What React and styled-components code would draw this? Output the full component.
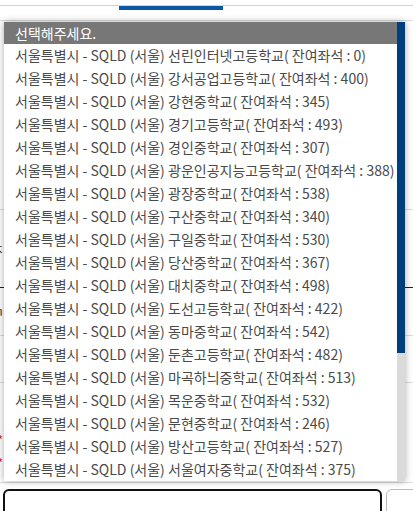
import React from "react";
import styled, { createGlobalStyle } from "styled-components";

const GlobalStyle = createGlobalStyle`
  html, body {
    margin: 0;
    padding: 0;
    background: #fff;
  }
  body {
    font-family: "Noto Sans CJK KR", "Noto Sans", "Liberation Sans", sans-serif;
  }
`;

const Page = styled.div`
  position: relative;
  width: 413px;
  height: 511px;
  overflow: hidden;
  background: #fff;
`;

const TabBar = styled.div`
  padding-top: 5px;
  height: 15px;
`;

const TabLine = styled.div`
  border-top: 1px solid #d3d3d3;
`;

const ActiveTab = styled.div`
  margin-left: 119px;
  width: 104px;
  height: 4px;
  background: #0b57a4;
`;

const FormTable = styled.div`
  border-top: 1px solid #dcdcdc;
  margin: 0 -20px;
`;

const FormRow = styled.div`
  display: flex;
  justify-content: space-between;
  height: ${(p) => p.$h}px;
  border-bottom: 1px solid ${(p) => (p.$dark ? "#222" : "#dcdcdc")};
  box-sizing: border-box;
  font-size: 13px;
  color: #333;
`;

const Cell = styled.div`
  display: flex;
  flex-direction: column;
  justify-content: ${(p) => p.$justify || "center"};
  gap: 6px;
  padding: ${(p) => p.$pad || "0"};
  width: 24px;
  box-sizing: border-box;
  align-items: ${(p) => (p.$right ? "flex-start" : "flex-end")};
`;

const Req = styled.span`
  color: #d22;
  font-size: 12px;
`;

const Warn = styled.span`
  color: #d22;
  font-size: 13px;
`;

const InputRow = styled.div`
  display: flex;
  gap: 4px;
  margin-top: 6px;
  padding-left: 3px;
`;

const Input = styled.div`
  width: ${(p) => p.$w}px;
  height: 30px;
  border: ${(p) => (p.$active ? "2px solid #111" : "1px solid #bbb")};
  border-radius: 6px;
  flex-shrink: 0;
`;

const Dropdown = styled.div`
  position: absolute;
  left: 4px;
  top: 22px;
  width: 401px;
  display: flex;
  background: #fff;
  box-shadow: 0 0 7px rgba(0, 0, 0, 0.35);
`;

const List = styled.ul`
  flex: 1;
  margin: 0;
  padding: 0;
  list-style: none;
`;

const Option = styled.li`
  height: ${(p) => (p.$header ? 22 : 23)}px;
  line-height: ${(p) => (p.$header ? 22 : 23)}px;
  padding-left: 11px;
  font-size: 14px;
  white-space: nowrap;
  background: ${(p) => (p.$header ? "#777" : "#fff")};
  color: ${(p) => (p.$header ? "#fff" : "#4a4a4a")};
`;

const Scrollbar = styled.div`
  width: 8px;
  background: #dadada;
  display: flex;
  flex-direction: column;
`;

const Thumb = styled.div`
  height: 331px;
  background: #003f7e;
`;

const schools = [
  ["선린인터넷고등학교", 0],
  ["강서공업고등학교", 400],
  ["강현중학교", 345],
  ["경기고등학교", 493],
  ["경인중학교", 307],
  ["광운인공지능고등학교", 388],
  ["광장중학교", 538],
  ["구산중학교", 340],
  ["구일중학교", 530],
  ["당산중학교", 367],
  ["대치중학교", 498],
  ["도선고등학교", 422],
  ["동마중학교", 542],
  ["둔촌고등학교", 482],
  ["마곡하늬중학교", 513],
  ["목운중학교", 532],
  ["문현중학교", 246],
  ["방산고등학교", 527],
  ["서울여자중학교", 375],
];

export default function App() {
  return (
    <Page>
      <GlobalStyle />
      <TabBar>
        <TabLine>
          <ActiveTab />
        </TabLine>
      </TabBar>
      <FormTable>
        <FormRow $h={189}>
          <Cell />
          <Cell $right $pad="100px 0 0 6px" $justify="flex-start">
            <span style={{ fontSize: 11 }}>El</span>
            <span style={{ fontSize: 11 }}>≤</span>
          </Cell>
        </FormRow>
        <FormRow $h={78} $dark>
          <Cell>ㅈ</Cell>
          <Cell />
        </FormRow>
        <FormRow $h={48}>
          <Cell>ㄱ</Cell>
          <Cell />
        </FormRow>
        <FormRow $h={47}>
          <Cell />
          <Cell />
        </FormRow>
        <FormRow $h={100}>
          <Cell $pad="48px 1px 0 0" $justify="flex-start">
            <Req>*</Req>
            <Req>*</Req>
          </Cell>
          <Cell $right $pad="50px 0 0 6px" $justify="flex-start">
            <Warn>시</Warn>
            <Warn>≤</Warn>
          </Cell>
        </FormRow>
      </FormTable>
      <InputRow>
        <Input $w={375} $active />
        <Input $w={60} />
      </InputRow>

      <Dropdown>
        <List>
          <Option $header>선택해주세요.</Option>
          {schools.map(([name, seats]) => (
            <Option key={name}>
              서울특별시 - SQLD (서울) {name}( 잔여좌석 : {seats})
            </Option>
          ))}
        </List>
        <Scrollbar>
          <Thumb />
        </Scrollbar>
      </Dropdown>
    </Page>
  );
}
